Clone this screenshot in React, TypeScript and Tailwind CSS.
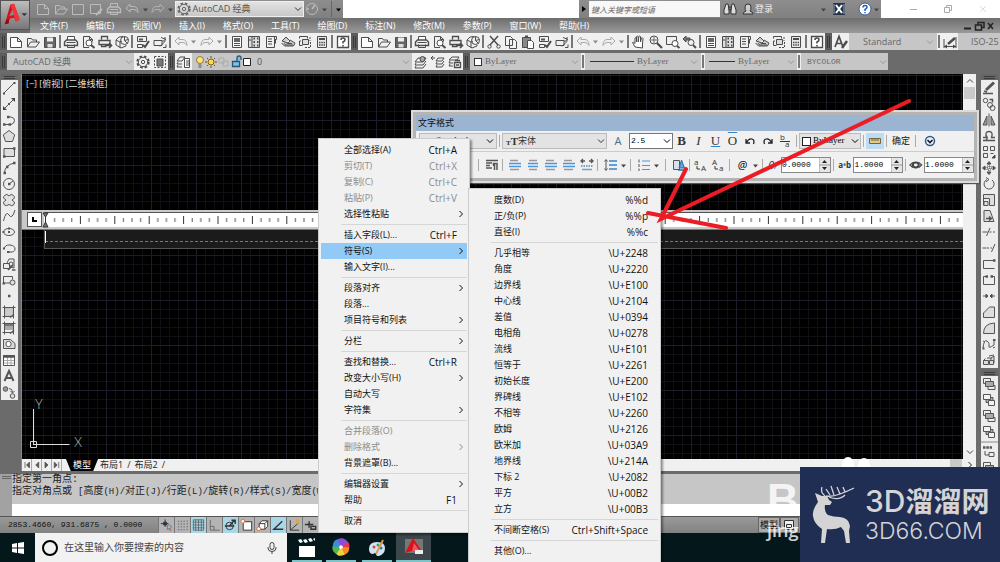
import { Fragment, type ReactNode } from 'react';

const ICONS: Record<string, ReactNode> = {
  new: <path d="M2.5 3.5h7l4 4v6h-11zM9.5 3.5v4h4" fill="#fff" />,
  open: <path d="M2.5 13V4.5h4l1 1.5h4v2M2.5 13l3-5h9l-3.5 5z" />,
  save: (
    <>
      <path d="M2.5 3.5h11v10h-11z" fill="#666" />
      <path d="M5 3.500h6v4H5z" fill="#eee" stroke="none" />
      <path d="M5.500 10h5v3.500h-5z" fill="#ddd" stroke="none" />
    </>
  ),
  saveas: (
    <>
      <path d="M2.500 3.500h10v9h-10z" fill="#777" />
      <path d="M5 3.500h5v3H5z" fill="#ddd" stroke="none" />
      <path d="M8 14l6-6" strokeWidth="2" />
    </>
  ),
  print: (
    <>
      <path d="M4.500 6V2.500h7V6M4.500 10.500v3h7v-3" fill="#fff" />
      <path d="M3.500 6h9l2 2v3.500h-13V8z" strokeWidth="1.400" />
      <path d="M3.500 8.500h9" />
    </>
  ),
  preview: (
    <>
      <path d="M9 13.500H3.500v-11h6l3 3v2M9.500 2.500v3h3" />
      <circle cx="9" cy="9" r="3" fill="#fff" />
      <path d="M11 11l3.500 3" strokeWidth="2" />
    </>
  ),
  publish: (
    <>
      <path d="M4.500 5.500v-3h6v3M2 6.500h11v4H2zM4.500 10.500v2h5" strokeWidth="1.300" />
      <path d="M8 11.500h6M12 9l2.500 2.500L12 14" strokeWidth="1.600" />
    </>
  ),
  dwf: (
    <>
      <path d="M9 2.500L5 3 2 6v5l5 3 5-2v-1M2 6l4 2v6M6 8l2-1" />
      <circle cx="10.500" cy="6.500" r="4" />
      <path d="M10.500 2.500v4l3 3M10.500 6.500l4-1" />
    </>
  ),
  cut: (
    <>
      <path d="M4 2l8 9M12 2L4 11" strokeWidth="1.500" />
      <circle cx="3.500" cy="12.500" r="1.700" />
      <circle cx="12.500" cy="12.500" r="1.700" />
    </>
  ),
  copy: <path d="M2.500 2.500h5l2 2v7h-7zM6.500 5.500h5l2 2v7h-7z" fill="#f4f4f4" />,
  paste: (
    <>
      <path d="M2.500 3.500h8v10h-8z" fill="#888" />
      <path d="M5 2.500h3" strokeWidth="2" />
      <path d="M7.500 6.500h4l2 2v6h-6z" fill="#fff" />
    </>
  ),
  match: (
    <>
      <path d="M2.500 2.500h9v5h-9zM2.500 10.500h5v3h-5z" />
      <path d="M4 4.500h4v2H4z" fill="#555" stroke="none" />
      <path d="M8 11l2 2 4-6" strokeWidth="2" />
    </>
  ),
  block: <path d="M2 6.500h8v5H2zM8 12.500l5-5M13 3v4h-3M9 3.500l5 2M11 13.500h3v-3" />,
  undo: <path d="M2 7l4-4v2.500h4q4 .5 4 6-2-3-4-3H6V11z" />,
  redo: <path d="M14 7l-4-4v2.500H6q-4 .5-4 6 2-3 4-3h4V11z" />,
  props: (
    <>
      <path d="M3.500 2.500h9v11h-9z" fill="#fff" />
      <path d="M5 4h6v4H5z" fill="#666" stroke="none" />
      <path d="M5 9.500h6M5 11.500h6" />
    </>
  ),
  dc: (
    <>
      <path d="M2.500 2.500h11v11h-11zM6 2.500v11M2.500 6h3" fill="#ddd" />
      <path d="M7.500 4.500h1.500M11 4.500h1.500M7.500 8h1.500M11 8h1.500M7.500 11.500h1.500M11 11.500h1.500" strokeWidth="2" />
    </>
  ),
  palette: <path d="M3.500 2.500h10v3h-2v8h-8zM11.500 5.500v-3M5 5h4M5 7.500h4M5 10h4M12.500 5.500v4" />,
  sheet: (
    <>
      <path d="M2 7l4-4 4 4-2 2zM1.500 9l3 3h9l1.500-3-5-3" fill="#ccc" />
      <path d="M4 9.500l2 1.500h7M6 8.500l2 1h4" />
    </>
  ),
  markup: (
    <>
      <path d="M2.500 4.500v-2h8v2M4 7H2.500v4.500h3" />
      <path d="M5.500 5.500h6v5h-6z" fill="#ddd" />
      <path d="M8 13.500h5.500V8M13 3v4" strokeDasharray="2 1" />
    </>
  ),
  calc: (
    <>
      <path d="M3.500 2.500h9v11h-9z" fill="#e8e8e8" />
      <path d="M5 5h6" strokeWidth="2" />
      <path d="M5 8.500h6M5 11h6" strokeWidth="1.500" strokeDasharray="1.500 .8" />
    </>
  ),
  help: (
    <>
      <path d="M2.500 2.500h11v11h-11z" fill="#fff" strokeWidth="1.300" />
      <path d="M6 6q0-2 2-2t2 1.700Q10 7 8 8v1.500M8 11v1.500" strokeWidth="1.600" />
    </>
  ),
  pan: <path d="M4 13L1.500 8.500q1-1 2.500 1V4q1-1 1.500 0v4V2.500q1-1 1.700 0V8l.6-5.500q1-1 1.700 0V8l1-4q1-.7 1.500.5L11.500 10v4z" fill="#fff" />,
  zoomrt: (
    <>
      <circle cx="6" cy="6" r="4" />
      <path d="M6 3v6M3 6h6" strokeWidth=".8" />
      <path d="M9 9l5 5" strokeWidth="2.200" />
    </>
  ),
  zoomwin: (
    <>
      <path d="M1.500 2.500h10v8h-10z" />
      <circle cx="10" cy="9.500" r="3" fill="#fff" />
      <path d="M12 12l2.500 2" strokeWidth="2" />
    </>
  ),
  zoomprev: (
    <>
      <circle cx="9" cy="8.500" r="3" />
      <path d="M11 11l3 3" strokeWidth="2" />
      <path d="M1 5l3-3v2h4v2H4v2z" fill="#777" />
    </>
  ),
  textstyle: (
    <>
      <path d="M2 13L6 2.500 10 13M3.500 9.500h5" strokeWidth="1.700" />
      <path d="M9 14l5-7" strokeWidth="2.500" />
    </>
  ),
  dimstyle: (
    <>
      <path d="M2 5v9M14 3v11M2 12.500h12" />
      <path d="M2 12.500l3-2v4zM14 12.500l-3-2v4z" fill="#444" stroke="none" />
      <path d="M6 10l7-6" strokeWidth="2.500" />
    </>
  ),
  gear: (
    <>
      <circle cx="8" cy="8" r="5.800" strokeDasharray="2.600 2" strokeWidth="1.800" />
      <circle cx="8" cy="8" r="4.700" />
      <circle cx="8" cy="8" r="1.700" />
    </>
  ),
  wssave: (
    <>
      <path d="M2.500 2.500h11v11h-11z" strokeDasharray="2 1.500" />
      <path d="M5 5h6v7H5z" fill="#777" />
    </>
  ),
  layers: (
    <>
      <path d="M1 7l3-4h5L6 7zM1 10l1-2M1 10h5M1 13l1-2M1 13h5" />
      <path d="M8.500 4.500h5v9h-5zM10 7h3M10 9h3M10 11h3" fill="#fff" />
    </>
  ),
  layerpick: (
    <>
      <path d="M2 8l3-4h8l-3 4zM2 11l1-2M2 11h8l3-4M2 14l1-2M2 14h8l3-4" />
      <circle cx="9.500" cy="5" r="2.500" fill="#aaa" />
    </>
  ),
  layerprev: <path d="M1 4h4M3 2L1 4l2 2M6 7l2-3h6l-2 3zM6 10l1-2M6 10h6l2-3M6 13l1-2M6 13h6l2-3" />,
  layerstate: (
    <>
      <path d="M2 6l3-3h7l-2 3zM2 9l1-2M2 9h4M2 12l1-2M2 12h4" />
      <path d="M7.500 8.500h6v5h-6zM9 11h3M8 6.500h5" fill="#eee" strokeWidth="1.300" />
    </>
  ),
  line: (
    <>
      <path d="M3 13L13 3" />
      <path d="M2 13.500h2M12.500 3h2" strokeWidth="2" />
    </>
  ),
  xline: (
    <>
      <path d="M3 13L13 3" />
      <path d="M2 14v-4l4 4zM14 2v4l-4-4z" fill="#444" stroke="none" />
      <path d="M7 8h2" strokeWidth="2" />
    </>
  ),
  pline: (
    <>
      <path d="M3 12.500h7q3.500-1 3.500-4T10 5H8" />
      <path d="M2 12.500h2.500M7.500 12.500H10M6 5h2.500" strokeWidth="2.400" />
    </>
  ),
  polygon: <path d="M8 2.500l5.700 4.300-2.200 6.700h-7L2.300 6.800z" fill="#ddd" />,
  rect: (
    <>
      <path d="M3 4.500h10.500v8H3z" fill="#ddd" />
      <path d="M2 12.500h2.500M12 4.500h2.500" strokeWidth="2.400" />
    </>
  ),
  arc: (
    <>
      <path d="M3.500 13q0-8 10-10" />
      <path d="M2.500 13h2.500M12 3h2.500M5 7h2.500" strokeWidth="2.400" />
    </>
  ),
  circle: (
    <>
      <circle cx="8" cy="8" r="5.500" />
      <path d="M8 8l4-3" />
      <path d="M7 8h2.500" strokeWidth="2.400" />
    </>
  ),
  cloud: <path d="M5 8Q1 6 3.500 3.500T8 4q2-3 4.500-.5T11 8q4 2 2 4.500t-5 0Q5 15 3 12.500T5 8z" fill="#e2e2e2" />,
  spline: <path d="M2.500 13Q5 2 8 7t6-5" />,
  ellipse: (
    <>
      <ellipse cx="8" cy="8" rx="5.500" ry="3.500" />
      <path d="M1.500 8h2M7 4.500h2M7 8h2" strokeWidth="2" />
    </>
  ),
  ellarc: (
    <>
      <path d="M3 9q1-4.500 6-4t5 4-5 3H8" />
      <path d="M2 8.500h2M6 12h2.500" strokeWidth="2.200" />
    </>
  ),
  insert: (
    <>
      <path d="M2.500 7.500h6v5h-6zM6 7l2-4h5v9l-4-1" />
      <path d="M7 14l5-5M11 14h3.500" strokeWidth="1.700" />
      <circle cx="10" cy="8" r="2" />
    </>
  ),
  mkblock: (
    <>
      <path d="M2.500 12V4.500h9v3M2.500 11h7" />
      <circle cx="11.500" cy="10.500" r="2.500" fill="#ddd" />
      <path d="M1.500 11.500h2.500" strokeWidth="2" />
    </>
  ),
  point: <path d="M7 8h2.500" strokeWidth="2.500" />,
  hatch: (
    <>
      <path d="M4 4h8v8H4z" fill="#ccc" stroke="#aaa" strokeDasharray="1 1" />
      <path d="M3.500 1.500v13M12.500 1.500v13M1.500 3.500h13M1.500 12.500h10" />
      <path d="M9 13.500l4-3" strokeWidth="1.500" />
    </>
  ),
  gradient: (
    <>
      <path d="M4 4h8v2H4z" fill="#777" stroke="none" />
      <path d="M4 6h8v4H4z" fill="#aaa" stroke="none" />
      <path d="M3.500 1.500v13M12.500 1.500v13M1.500 3.500h13M1.500 12.500h10" />
      <path d="M9 13.500l4-3" strokeWidth="1.500" />
    </>
  ),
  region: (
    <>
      <path d="M2.500 3.500h7l4.500 4v5H2.500z" fill="#ddd" />
      <circle cx="7.500" cy="8" r="2.700" fill="#fff" />
    </>
  ),
  table: (
    <>
      <path d="M2.500 3.500h11v10h-11z" fill="#fff" />
      <path d="M3 8.500h10M3 11h10M6.500 5v8M10 5v8" stroke="#aaa" />
      <path d="M2 4.500h12" strokeWidth="2.500" />
    </>
  ),
  mtext: <path d="M3.500 13L8 3l4.500 10M5 10h6" strokeWidth="2" />,
  addsel: (
    <>
      <circle cx="4.500" cy="5" r="2.300" fill="#999" />
      <circle cx="11.500" cy="12" r="2.300" fill="#ddd" />
      <path d="M8 4.500q3.500 0 3.500 4M9.500 7l2 2 2-2" />
    </>
  ),
  erase: (
    <>
      <path d="M5 10l8-7.500" strokeWidth="3" />
      <path d="M3 11l3 1M2 13.500h10" strokeWidth="1.500" />
    </>
  ),
  copyobj: (
    <>
      <circle cx="4.500" cy="4.500" r="2.200" />
      <circle cx="9" cy="9" r="2.500" />
      <circle cx="11.500" cy="12" r="2.500" />
      <path d="M8.500 3.500h3v3" strokeWidth="1.500" />
    </>
  ),
  mirror: (
    <>
      <path d="M6 4v9H2zM10 4v9h4z" fill="#999" />
      <path d="M8 1.500v13" />
    </>
  ),
  offset: <path d="M2 12.500h12M2 9.500h3.500q-2-6 2.500-6t2.500 6H14M5 12q2.500-2 0-5" strokeWidth="1.300" />,
  array: (
    <>
      <path d="M2.500 2.500h4v4h-4zM9.500 2.500h4v4h-4zM2.500 9.500h4v4h-4zM9.500 9.500h3" />
      <path d="M14 11v3h-3z" fill="#222" />
    </>
  ),
  move: (
    <>
      <path d="M6 4l2-2.500L10 4zM6 12l2 2.500 2-2.500zM4 6L1.500 8 4 10zM12 6l2.500 2-2.500 2z" fill="#444" />
      <path d="M6 6h4v4H6zM8 4v8M4 8h8" strokeDasharray="1 1" />
    </>
  ),
  rotate: (
    <>
      <path d="M6 3.500A5 5 0 1 0 11 4" />
      <path d="M5 1.500l3 2-3 2.500" />
    </>
  ),
  scale: <path d="M2.500 13.500v-11h11v11h-5v-7h-6M3 9.500h4v4H3z" fill="#ddd" />,
  stretch: (
    <>
      <path d="M3 13.500v-11h6l4 11z" fill="#ddd" />
      <path d="M5 10.500h5M8 8.500l2.500 2-2.500 2" strokeWidth="1.500" />
    </>
  ),
  trim: (
    <>
      <path d="M5.500 12L9 4M1.500 8h5" />
      <path d="M8.500 8H14" strokeDasharray="2 1.500" />
    </>
  ),
  extend: (
    <>
      <path d="M10.500 12L14 4M1.500 8h4" />
      <path d="M6 8h5" strokeDasharray="2 1.500" />
    </>
  ),
  breakpt: (
    <>
      <path d="M13.500 4.500H2.500v8h11" />
      <path d="M12 4.500h2.500" strokeWidth="2.500" />
    </>
  ),
  brk: (
    <>
      <path d="M5 4.500H2.500v8h11v-8H11" />
      <path d="M4.500 4.500H7M9.500 4.500H12" strokeWidth="2.500" />
    </>
  ),
  join: <path d="M2 8h5M9 8h5M5 6l2 2-2 2zM11 6L9 8l2 2z" fill="#444" />,
  chamfer: <path d="M2.500 13.500V9l6-6h5v10.500z" fill="#ddd" />,
  fillet: <path d="M2.500 13.500Q2.500 3.500 13.500 3v10.500z" fill="#ddd" />,
  blend: (
    <>
      <path d="M2 12Q3 3 6 5t2 5 5-1V4" />
      <path d="M1.500 12.500h2M12 4h2.500" strokeWidth="1.800" />
      <path d="M2 5l2 1M12 12l2-1" />
    </>
  ),
  explode: <path d="M2.500 8.500h5v4h-5zM2.500 8.500l2-2M8.500 8.500h4v4h-4zM6 6h4v3M10 6l3-2v7M8 4l5-1" fill="#ddd" />,
  front: (
    <>
      <path d="M2.500 2.500h7v5h-7zM7 9.500h7v4H7z" />
      <path d="M4.500 5.500h8v5h-8z" fill="#aaa" />
    </>
  ),
  back: (
    <>
      <path d="M5 5.500h7v5H5z" fill="#aaa" />
      <path d="M2.500 2.500h7v5h-7zM7.500 8.500h6v5h-6z" fill="#f2f2f2" />
    </>
  ),
  abcfront: (
    <>
      <path d="M2 3.500h9" strokeWidth="2.500" strokeDasharray="2.500 .8" />
      <path d="M4 7v4h4M8 8.500h5v4H8z" />
    </>
  ),
  wheel: (
    <>
      <circle cx="8" cy="8" r="5.500" />
      <path d="M8 8l3-4M3 8h2" strokeWidth="1.500" />
    </>
  ),
  para: (
    <>
      <path d="M2 3.500h12M2 6h6M2 8.500h4M2 11h6" strokeWidth="1.500" />
      <path d="M10.500 13V6.500M13 13V6.500H9.500v2.500" strokeWidth="1.500" />
    </>
  ),
  alignl: (
    <>
      <path d="M3 3.500h8M3 12.500h9" stroke="#999" strokeWidth="1.500" />
      <path d="M2 6.500h12M2 9.500h12" stroke="#4a97dc" strokeWidth="1.600" />
    </>
  ),
  alignc: (
    <>
      <path d="M4 3.500h8M4 12.500h8" stroke="#999" strokeWidth="1.500" />
      <path d="M3 6.500h10M3 9.500h10" stroke="#4a97dc" strokeWidth="1.600" />
    </>
  ),
  ruler2: (
    <>
      <path d="M2 4h4M10 4h4M4 2L2 4l2 2M12 2l2 2-2 2" strokeWidth="1.300" />
      <path d="M2 9h12" stroke="#6aa7d8" strokeWidth="2" strokeDasharray="1.500 1" />
      <path d="M3 12.500h10" stroke="#999" strokeWidth="1.500" />
    </>
  ),
  spacing: (
    <>
      <path d="M3 3v10M1.500 4.500L3 2.500l1.500 2M1.500 11.500l1.500 2 1.500-2" />
      <path d="M6 4h8M6 8h8M6 12h8" stroke="#3484cc" strokeWidth="1.700" />
    </>
  ),
  list: (
    <>
      <path d="M3 2.500v3M3 7v3M3 11.500v2.500" />
      <path d="M6 4h8M6 8.500h8M6 12.500h8" stroke="#4a97dc" />
    </>
  ),
  field: (
    <>
      <path d="M2.500 3.500h6v9h-6z" fill="#d5e2ee" />
      <path d="M8 11l2.500-8 3 8z" fill="#6aa0cc" stroke="#2f6ca5" />
      <path d="M7 13h7" stroke="#2f6ca5" strokeWidth="1.500" />
    </>
  ),
  snap: (
    <>
      <path d="M2 6.500h8M6.500 2v8M5 5h3v3H5z" fill="#444" />
      <path d="M9 8v5M9 8h2q2 0 2 2t-2 2H9" stroke="#4a80b8" />
      <circle cx="12" cy="13" r="1" stroke="#d06040" />
    </>
  ),
  dots: <path d="M3 4h8M3 7h8M3 10h8M3 13h8M13 3v11" stroke="#666" strokeDasharray="1.500 1.500" />,
  grid: <path d="M2.500 2.500h11v11h-11zM5 2v12M8 2v12M11 2v12M2 5h12M2 8h12M2 11h12" stroke="#555" strokeWidth=".8" />,
  ortho: <path d="M3.500 2.500v11h10M3.500 9.500h4v4" stroke="#666" />,
  polar: (
    <>
      <circle cx="7" cy="9" r="4" />
      <path d="M2 9h10M7 9l5-6M9 3h4v4" strokeWidth="1.500" />
    </>
  ),
  osnap: (
    <>
      <path d="M4.500 4.500h9v9h-9z" fill="#fff" />
      <circle cx="4" cy="4" r="2" fill="#fff" stroke="#e06a30" />
    </>
  ),
  osnap3: (
    <>
      <path d="M4.500 6.500h6v6h-6zM4.500 6.500l3-3h6v6l-3 3M10.500 6.500l3-3" fill="#fff" />
      <circle cx="4" cy="12" r="2" fill="#fff" stroke="#e06a30" />
    </>
  ),
  angle: <path d="M13 12.500H3L12 4" strokeWidth="1.500" />,
  ducs: (
    <>
      <path d="M3.500 3v10.500H13M3.500 13.500L12 6" />
      <path d="M10 2l2 2-2 3" stroke="#f0a020" strokeWidth="2" />
    </>
  ),
  dyn: <path d="M2 7.500h9M6.500 4v7M8.500 9.500h5v3h-5z" strokeWidth="1.500" />,
};

function Icon({ name, className = 'text-[#555]' }: { name: string; className?: string }) {
  return (
    <svg viewBox="0 0 16 16" className={`size-4 shrink-0 ${className}`} fill="none" stroke="currentColor" aria-hidden="true">
      {ICONS[name]}
    </svg>
  );
}

function Chevron({ className = '' }: { className?: string }) {
  return (
    <svg viewBox="0 0 8 8" className={`size-2 shrink-0 ${className}`} fill="none" stroke="currentColor" aria-hidden="true">
      <path d="M1 2.500l3 3 3-3" />
    </svg>
  );
}

function Caret({ className = 'text-[#444]' }: { className?: string }) {
  return (
    <svg viewBox="0 0 9 9" className={`size-[9px] shrink-0 ${className}`} fill="currentColor" aria-hidden="true">
      <path d="M2 3.500h5l-2.500 3z" />
    </svg>
  );
}

/* Dropdown with an optional leading drawing */
function Combo({
  label,
  value,
  className = '',
  textClass = '',
  lead,
}: {
  label: string;
  value: string;
  className?: string;
  textClass?: string;
  lead?: ReactNode;
}) {
  return (
    <div className={`flex items-center ${className}`}>
      {lead}
      <select aria-label={label} className={`min-w-0 flex-1 appearance-none bg-transparent outline-none ${textClass}`}>
        <option>{value}</option>
      </select>
      <Chevron />
    </div>
  );
}

/* '|' draws a separator; an icon ending in '+' gets a drop arrow */
function Tools({ items }: { items: string[] }) {
  return (
    <div className="flex h-[17px] shrink-0 items-center bg-[#f0f0f0]">
      {items.map((item, i) => {
        if (item === '|') return <span key={i} className="mx-px h-[13px] w-[2px] bg-[#777]" />;
        const name = item.replace('+', '');
        const dim = name === 'undo' || name === 'redo';
        return (
          <Fragment key={i}>
            <button aria-label={name} className="flex w-[17px] justify-center">
              <Icon name={name} className={dim ? 'text-[#aaa]' : 'text-[#4c4c4c]'} />
            </button>
            {item.endsWith('+') && <Caret className="text-[#888]" />}
          </Fragment>
        );
      })}
    </div>
  );
}

function Grip() {
  return (
    <div className="flex h-[17px] w-[7px] shrink-0 items-center justify-center bg-[#5c5c5c]">
      <span className="h-3 w-[3px] border-x border-[#3a3a3a]" />
    </div>
  );
}

const STANDARD = ['new', 'open', 'save', '|', 'print', 'preview', 'publish', 'dwf', '|'];
const HISTORY = ['undo+', 'redo+', '|'];
const PALETTES = ['props', 'dc', 'palette', 'sheet', 'markup', 'calc', '|', 'help'];

const MENUS = ['文件(F)', '编辑(E)', '视图(V)', '插入(I)', '格式(O)', '工具(T)', '绘图(D)', '标注(N)', '修改(M)', '参数(P)', '窗口(W)', '帮助(H)'];

function Header() {
  return (
    <header className="flex shrink-0 bg-[#6b6b6b]">
      <button aria-label="Application menu" className="flex h-[30px] w-[30px] items-center border border-[#555] bg-gradient-to-b from-[#bdbdbd] to-[#777]">
        <svg viewBox="0 0 30 30" className="size-7" aria-hidden="true">
          <path d="M4 25L10 4l4-1 6 17-4 2-2-4-5 1-1 5z" fill="#d3141c" />
          <path d="M10 4l4-1 6 17-4 2z" fill="#f0353c" />
          <path d="M9 16l3-7 2 6z" fill="#8a8a8a" />
          <path d="M4 25l4-1 1-5-3 1z" fill="#8f0b10" />
          <path d="M22 13h6l-3 3z" fill="#333" />
        </svg>
      </button>
      <div className="min-w-0 flex-1">
        <div className="flex h-[18px] bg-white">
          <div className="flex w-[313px] shrink-0 items-center bg-gradient-to-b from-[#8e8e8e] to-[#808080] pl-1">
            {['new', 'open', 'save', 'saveas', 'print', 'undo'].map((n) => (
              <button key={n} aria-label={n} className="flex w-[18px] justify-center">
                <Icon name={n} className="text-[#bbb] [&_*]:fill-none" />
              </button>
            ))}
            <Caret />
            <button aria-label="redo" className="flex w-[17px] justify-center">
              <Icon name="redo" className="text-[#b0b0b0]" />
            </button>
            <Caret />
            <Combo
              label="Workspace"
              value="AutoCAD 经典"
              className="h-4 w-[130px] border border-[#eee] bg-gradient-to-b from-[#e2e2e2] to-[#c8c8c8] pr-px text-[#333]"
              textClass="text-[9px] text-[#555]"
              lead={<Icon name="gear" className="text-[#666]" />}
            />
            <Icon name="wheel" className="text-[#bbb]" />
            <Caret />
            <span className="mx-[2px] h-4 w-px bg-[#666]" />
            <Caret className="text-black" />
          </div>
          <div className="flex-1" />
          <div className="flex w-[302px] shrink-0 items-center bg-gradient-to-b from-[#8e8e8e] to-[#808080]">
            <svg viewBox="0 0 8 8" className="ml-px size-2" aria-hidden="true">
              <path d="M2 1l4 3-4 3z" fill="#000" />
            </svg>
            <input
              aria-label="Search"
              placeholder="键入关键字或短语"
              className="ml-px h-4 w-[131px] bg-[#f8f8f8] pl-[2px] text-[8px] italic outline-none placeholder:text-[#666]"
            />
            <svg viewBox="0 0 14 14" className="ml-[3px] size-3.5" fill="#ddd" stroke="#333" aria-hidden="true">
              <path d="M3 2h2l1 5v5H1V8zM9 2h2l2 6v4H8V7zM6 5h2v3H6z" />
            </svg>
            <button className="ml-1 flex items-center text-[9px] text-[#eee]">
              <svg viewBox="0 0 14 14" className="size-3.5" fill="#ccc" stroke="#333" aria-hidden="true">
                <path d="M2 12q0-2 3-3-1-1-1-4t3-3 3 3-1 4q3 1 3 3z" />
              </svg>
              登录
            </button>
            <span className="flex-1" />
            <Caret />
            <svg viewBox="0 0 14 14" className="mx-1 size-3.5" aria-hidden="true">
              <path d="M1 1h12v12H1z" fill="#26344a" />
              <path d="M4 3l6 8M10 3l-6 8" stroke="#fff" strokeWidth="2" />
              <path d="M2 2v10M12 2v10" stroke="#9ab" />
            </svg>
            <svg viewBox="0 0 14 14" className="ml-2 size-3.5" fill="none" aria-hidden="true">
              <circle cx="7" cy="7" r="6" fill="#fff" stroke="#3c5f96" />
              <path d="M5 5.500q0-2 2-2t2 1.700Q9 6.500 7 7.500V9M7 10v1.300" stroke="#1f5fc0" strokeWidth="1.500" />
            </svg>
            <Caret />
          </div>
          <div className="flex w-[119px] shrink-0 items-center justify-around pl-4 text-[#aaa]">
            <svg viewBox="0 0 10 10" className="size-2.5" fill="none" stroke="currentColor" aria-hidden="true">
              <path d="M1 5.500h7" />
            </svg>
            <svg viewBox="0 0 10 10" className="size-2.5" fill="none" stroke="currentColor" aria-hidden="true">
              <path d="M1.500 3.500h5v5h-5zM3.500 3V1.500h5v5H7" />
            </svg>
            <svg viewBox="0 0 10 10" className="size-2.5" fill="none" stroke="#ddd" aria-hidden="true">
              <path d="M2 2l6 6M8 2L2 8" />
            </svg>
          </div>
        </div>
        <nav className="flex h-[15px] items-center gap-[18px] bg-gradient-to-b from-[#6e6e6e] to-[#9a9a9a] pl-[10px] text-[9px] leading-[15px] text-white">
          {MENUS.map((m) => (
            <button key={m} className="whitespace-nowrap">
              {m}
            </button>
          ))}
          <span className="flex-1" />
          <svg viewBox="0 0 34 10" className="mr-1 h-2.5 w-[34px]" fill="none" stroke="#222" aria-hidden="true">
            <path d="M2 7.500h7" strokeWidth="2" />
            <path d="M13.500 4h6v5h-6zM16 3.500V1.500h6v5h-2M26 2l5 6M31 2l-5 6" strokeWidth="1.500" />
          </svg>
        </nav>
      </div>
    </header>
  );
}

function ToolRows() {
  const field = 'h-[17px] bg-[#c6c6c6] text-[#999]';
  return (
    <>
      <div className="flex h-[17px] shrink-0 overflow-hidden">
        <Grip />
        <Tools items={[...STANDARD, 'match', 'block', '|', ...HISTORY, ...PALETTES]} />
        <Grip />
        <Tools
          items={[...STANDARD, 'cut', 'copy', 'paste', 'match', 'block', '|', ...HISTORY, 'pan', 'zoomrt', 'zoomwin', 'zoomprev', '|', ...PALETTES]}
        />
        <Grip />
        <Tools items={['textstyle']} />
        <Combo label="Text style" value="Standard" className={`${field} w-[88px] pl-[14px] pr-[3px]`} textClass="text-[9px] text-[#666]" />
        <Tools items={['|', 'dimstyle']} />
        <Combo label="Dimension style" value="ISO-25" className={`${field} min-w-[42px] flex-1 pl-[13px]`} textClass="text-[9px] text-[#666] min-w-[50px]" />
      </div>
      <div className="mt-[3px] flex h-[17px] shrink-0">
        <Grip />
        <Combo label="Workspaces" value="AutoCAD 经典" className={`${field} w-[127px] pl-[6px] pr-px`} textClass="text-[9px] text-[#666]" />
        <Tools items={['gear', 'wssave']} />
        <Grip />
        <Tools items={['layers']} />
        <Combo
          label="Layer"
          value="0"
          className={`${field} w-[220px] pl-px pr-[2px]`}
          textClass="pl-1 text-[9px] text-[#555]"
          lead={
            <svg viewBox="0 0 60 16" className="h-4 w-[60px] shrink-0" fill="none" aria-hidden="true">
              <circle cx="7" cy="6" r="3.500" fill="#ffe27a" stroke="#8a7a3a" />
              <path d="M5.500 11h3M5.500 13h3" stroke="#555" />
              <circle cx="18" cy="8" r="3" fill="#ffd84a" stroke="#776020" />
              <path d="M18 2v2M18 12v2M12 8h2M22 8h2M14 4l1 1M22 4l-1 1M14 12l1-1M22 12l-1-1" stroke="#665520" />
              <path d="M26 4h5v5h-5zM30 7h5v5h-5z" stroke="#aaa" />
              <path d="M39.500 7.500h7v5h-7zM44 7V4q0-2 2-2t2 2v2" fill="#7fc0ea" stroke="#27567a" strokeWidth="1.300" />
              <path d="M50.500 4.500h7v7h-7z" fill="#fff" stroke="#222" />
            </svg>
          }
        />
        <Tools items={['layerpick', 'layerprev', 'layerstate']} />
        <Grip />
        <Combo
          label="Color"
          value="ByLayer"
          className={`${field} w-[111px] pl-1 pr-[2px]`}
          textClass="pl-[3px] font-[family-name:'Liberation_Serif',serif] text-[9px] text-[#666]"
          lead={<span className="size-[8px] border border-[#333] bg-white" />}
        />
        <Tools items={['|']} />
        <Combo
          label="Linetype"
          value="ByLayer"
          className={`${field} w-[116px] pl-[5px] pr-[3px]`}
          textClass="pl-[3px] font-[family-name:'Liberation_Serif',serif] text-[9px] text-[#666]"
          lead={<span className="h-px w-[44px] bg-[#333]" />}
        />
        <Tools items={['|']} />
        <Combo
          label="Lineweight"
          value="ByLayer"
          className={`${field} w-[92px] pl-1 pr-[2px]`}
          textClass="pl-[3px] font-[family-name:'Liberation_Serif',serif] text-[9px] text-[#666]"
          lead={<span className="h-px w-[26px] bg-[#333]" />}
        />
        <Tools items={['|']} />
        <Combo
          label="Plot style"
          value="BYCOLOR"
          className={`${field} w-[87px] pl-[6px] pr-px`}
          textClass="font-[family-name:'Liberation_Mono',monospace] text-[8px] text-[#666]"
        />
      </div>
    </>
  );
}

const DRAW = ['line', 'xline', 'pline', 'polygon', 'rect', 'arc', 'circle', 'cloud', 'spline', 'ellipse', 'ellarc', 'insert', 'mkblock', 'point', 'hatch', 'gradient', 'region', 'table', 'mtext', 'addsel'];
const MODIFY = ['erase', 'copyobj', 'mirror', 'offset', 'array', 'move', 'rotate', 'scale', 'stretch', 'trim', 'extend', 'breakpt', 'brk', 'join', 'chamfer', 'fillet', 'blend', 'explode'];
const ORDER = ['front', 'back', 'front', 'back', '|', 'abcfront', 'front'];

function Column({ items }: { items: string[] }) {
  return (
    <div className="w-[17px] bg-[#ededed]">
      <div className="flex h-[6px] items-center justify-center bg-[#666]">
        <span className="h-[3px] w-[11px] border-y border-[#3a3a3a]" />
      </div>
      {items.map((n, i) =>
        n === '|' ? (
          <div key={i} className="my-px h-[2px] bg-[#bbb]" />
        ) : (
          <button key={i} aria-label={n} className="block">
            <Icon name={n} />
          </button>
        ),
      )}
    </div>
  );
}

function Canvas() {
  return (
    <div className="relative min-h-0 flex-1 overflow-hidden bg-black">
      <svg className="absolute inset-0 size-full" aria-hidden="true">
        <defs>
          <pattern id="grid" x="39" y="1" width="45" height="45" patternUnits="userSpaceOnUse">
            <path d="M9.500 0v45M18.500 0v45M27.500 0v45M36.500 0v45M0 9.500h45M0 18.500h45M0 27.500h45M0 36.500h45" stroke="#0f0f16" />
            <path d="M.5 0v45M0 .5h45" stroke="#1c1d2b" />
          </pattern>
        </defs>
        <rect width="100%" height="100%" fill="url(#grid)" />
      </svg>
      <p className="relative pl-1 pt-[2px] text-[9px] leading-4 text-[#ddd]">[−] [俯视] [二维线框]</p>

      {/* In-place editor: ruler and text line */}
      <div className="absolute inset-x-0 top-[136px]">
        <div className="flex h-5 items-center border-b border-[#777] bg-[#c9c9c9] pl-[5px]">
          <div className="flex size-[15px] items-center justify-center border border-[#555] bg-white">
            <span className="size-[5px] border-b-2 border-l-2 border-black" />
          </div>
          <svg className="h-4 min-w-0 flex-1" aria-hidden="true">
            <defs>
              <pattern id="ticks" x="3.500" width="34.400" height="16" patternUnits="userSpaceOnUse">
                <path d="M.5 4v8" stroke="#333" />
                <path d="M9.100 6v4M17.700 6v4M26.300 6v4" stroke="#555" />
              </pattern>
            </defs>
            <rect x="2" y="1" width="100%" height="14" fill="#fff" />
            <rect x="2" y="0" width="100%" height="1" fill="#555" />
            <rect x="6" width="100%" height="16" fill="url(#ticks)" />
            <path d="M1 1h5L3.500 5zM1 15h5l-2.500-5zM3.500 4v7" fill="#777" stroke="#333" />
          </svg>
        </div>
        <div className="ml-[22px] h-[19px] border-b border-l border-[#555] bg-[#1b1b1b] pt-px">
          <div className="h-[11px] border-b border-dashed border-[#777]">
            <div className="h-3 w-px bg-white" />
          </div>
        </div>
      </div>

      <svg viewBox="0 0 60 60" className="absolute bottom-1 left-1 size-[60px] overflow-visible" fill="none" stroke="#ddd" aria-hidden="true">
        <path d="M7.500 14v36M7.500 49.500h36M4.500 46.500h6v6h-6z" />
        <text x="9" y="14" fontSize="13" fontWeight="300" fill="#bbb" stroke="none" fontFamily="Lato, sans-serif">Y</text>
        <text x="48" y="52" fontSize="13" fontWeight="300" fill="#bbb" stroke="none" fontFamily="Lato, sans-serif">X</text>
      </svg>
    </div>
  );
}

function LayoutTabs() {
  return (
    <div className="flex h-3 shrink-0 items-center bg-[#f0f0f0] text-[9px] leading-3 text-[#222]">
      {['M4 2v8M10 2L6 6l4 4z', 'M9 2L5 6l4 4z', 'M4 2l4 4-4 4z', 'M3 2l4 4-4 4zM9 2v8'].map((d) => (
        <button key={d} aria-label="Scroll tabs" className="border-r border-[#aaa]">
          <svg viewBox="0 0 12 12" className="h-3 w-[9px]" fill="#555" stroke="#555" aria-hidden="true">
            <path d={d} />
          </svg>
        </button>
      ))}
      <button className="ml-1 bg-black px-[7px] text-white [clip-path:polygon(0_0,100%_0,85%_100%,15%_100%)]">模型</button>
      <button className="pl-[2px]">布局1</button>
      <span className="px-1">/</span>
      <button>布局2</button>
      <span className="px-1">/</span>
      <span className="flex-1" />
      <span className="mr-1 h-3 w-3 bg-[#c9c9c9]" />
      <Chevron className="mr-[2px] -rotate-90" />
    </div>
  );
}

type Entry = { label: string; keys?: string; sub?: boolean; off?: boolean; on?: boolean } | null;

const MENU: Entry[] = [
  { label: '全部选择(A)', keys: 'Ctrl+A' },
  { label: '剪切(T)', keys: 'Ctrl+X', off: true },
  { label: '复制(C)', keys: 'Ctrl+C', off: true },
  { label: '粘贴(P)', keys: 'Ctrl+V', off: true },
  { label: '选择性粘贴', sub: true },
  null,
  { label: '插入字段(L)...', keys: 'Ctrl+F' },
  { label: '符号(S)', sub: true, on: true },
  { label: '输入文字(I)...' },
  null,
  { label: '段落对齐', sub: true },
  { label: '段落...' },
  { label: '项目符号和列表', sub: true },
  null,
  { label: '分栏', sub: true },
  null,
  { label: '查找和替换...', keys: 'Ctrl+R' },
  { label: '改变大小写(H)', sub: true },
  { label: '自动大写' },
  { label: '字符集', sub: true },
  null,
  { label: '合并段落(O)', off: true },
  { label: '删除格式', sub: true, off: true },
  { label: '背景遮罩(B)...' },
  null,
  { label: '编辑器设置', sub: true },
  { label: '帮助', keys: 'F1' },
  null,
  { label: '取消' },
];

const SYMBOLS: Entry[] = [
  { label: '度数(D)', keys: '%%d' },
  { label: '正/负(P)', keys: '%%p' },
  { label: '直径(I)', keys: '%%c' },
  null,
  { label: '几乎相等', keys: '\\U+2248' },
  { label: '角度', keys: '\\U+2220' },
  { label: '边界线', keys: '\\U+E100' },
  { label: '中心线', keys: '\\U+2104' },
  { label: '差值', keys: '\\U+0394' },
  { label: '电相角', keys: '\\U+0278' },
  { label: '流线', keys: '\\U+E101' },
  { label: '恒等于', keys: '\\U+2261' },
  { label: '初始长度', keys: '\\U+E200' },
  { label: '界碑线', keys: '\\U+E102' },
  { label: '不相等', keys: '\\U+2260' },
  { label: '欧姆', keys: '\\U+2126' },
  { label: '欧米加', keys: '\\U+03A9' },
  { label: '地界线', keys: '\\U+214A' },
  { label: '下标 2', keys: '\\U+2082' },
  { label: '平方', keys: '\\U+00B2' },
  { label: '立方', keys: '\\U+00B3' },
  null,
  { label: '不间断空格(S)', keys: 'Ctrl+Shift+Space' },
  null,
  { label: '其他(O)...' },
];

function PopupMenu({ entries, className }: { entries: Entry[]; className: string }) {
  return (
    <div role="menu" className={`absolute border border-[#ccc] bg-[#f1f1f1] px-[2px] py-[3px] shadow-[2px_2px_2px_rgba(0,0,0,0.4)] ${className}`}>
      {entries.map((e, i) =>
        e === null ? (
          <div key={i} role="separator" className="ml-5 flex h-[5px] items-center">
            <span className="h-px flex-1 bg-[#d6d6d6]" />
          </div>
        ) : (
          <button
            key={i}
            role="menuitem"
            disabled={e.off}
            className={`flex h-4 w-full items-center pl-[23px] text-left text-[9px] leading-4 ${e.on ? 'bg-[#91c9f7]' : ''} ${e.off ? 'text-[#8c8c8c]' : 'text-[#111]'}`}
          >
            <span className="flex-1">{e.label}</span>
            {e.keys && <span className="pr-[10px] text-[10px]">{e.keys}</span>}
            {e.sub && <Chevron className="mr-[2px] -rotate-90" />}
          </button>
        ),
      )}
    </div>
  );
}

function Bar() {
  return <span className="mx-[2px] h-3 w-px shrink-0 bg-[#aaa]" />;
}

function Spin({ label, value }: { label: string; value: string }) {
  return (
    <div className="flex h-4 w-[50px] border border-[#888] bg-white">
      <input aria-label={label} defaultValue={value} className="w-[37px] min-w-0 font-[family-name:'Liberation_Mono',monospace] text-[8px] outline-none" />
      <svg viewBox="0 0 11 14" className="h-3.5 w-[11px] bg-[#e6e6e6]" aria-hidden="true">
        <path d="M0 0v14M0 7h11" stroke="#999" />
        <path d="M3 5h5L5.500 2zM3 9h5l-2.500 3z" fill="#222" />
      </svg>
    </div>
  );
}

function TextFormat() {
  const glyph = "w-[17px] text-center font-[family-name:'Liberation_Serif',serif] text-[13px] leading-4 text-[#333]";
  return (
    <section className="absolute left-[411px] top-[110px] w-[568px] border-2 border-[#dcdcdc] bg-[#b4b4b4] p-[3px] shadow-[1px_1px_1px_#555]">
      <h2 className="h-4 bg-[#9ab4d2] pl-[2px] text-[9px] leading-4 text-[#111]">文字格式</h2>
      <div className="flex h-[21px] items-center border-b border-[#ccc] bg-[#f0f0f0] pl-[3px]">
        <Combo
          label="Style"
          value="Standard"
          className="h-4 w-[78px] border border-[#bbb] bg-[#e3e3e3] pl-4 pr-[2px]"
          textClass="font-[family-name:'Liberation_Serif',serif] text-[9px]"
        />
        <Bar />
        <Combo
          label="Font"
          value="宋体"
          className="h-4 w-[105px] border border-[#bbb] bg-[#e3e3e3] pl-[3px] pr-px text-[#333]"
          textClass="text-[9px]"
          lead={<span className="font-[family-name:'Liberation_Serif',serif] text-[7px] font-bold">T<b className="text-[11px]">T</b></span>}
        />
        <span className="w-[22px] text-center text-[11px] leading-4 text-[#3f7196]">A</span>
        <Combo
          label="Height"
          value="2.5"
          className="h-4 w-[44px] border border-[#777] bg-white pl-px pr-px"
          textClass="font-[family-name:'Liberation_Mono',monospace] text-[8px]"
        />
        <button className={`${glyph} font-bold`}>B</button>
        <button className={`${glyph} italic`}>I</button>
        <button className={`${glyph} underline decoration-[#3484cc]`}>U</button>
        <button className={`${glyph} overline decoration-[#3484cc]`}>O</button>
        <button aria-label="Undo" className="flex w-[18px] justify-center">
          <svg viewBox="0 0 12 12" className="size-3" fill="none" stroke="#222" strokeWidth="1.300" aria-hidden="true">
            <path d="M2 4v4h4M2.500 7.500Q5 3 8 4t1.500 5" />
          </svg>
        </button>
        <button aria-label="Redo" className="flex w-[17px] justify-center">
          <svg viewBox="0 0 12 12" className="size-3" fill="none" stroke="#222" strokeWidth="1.300" aria-hidden="true">
            <path d="M10 4v4H6M9.500 7.500Q7 3 4 4T2.500 9" />
          </svg>
        </button>
        <button aria-label="Stack" className="flex w-[18px] justify-center">
          <svg viewBox="0 0 14 14" className="size-3.5 overflow-visible" fill="#333" fontSize="8" aria-hidden="true">
            <text x="2" y="6">b</text>
            <path d="M2 7.500h10" stroke="#333" />
            <text x="7" y="13">a</text>
          </svg>
        </button>
        <Bar />
        <Combo
          label="Text color"
          value="ByLayer"
          className="h-4 w-[62px] border border-[#bbb] bg-[#e3e3e3] pl-[2px] pr-px"
          textClass="pl-[2px] font-[family-name:'Liberation_Serif',serif] text-[9px]"
          lead={<span className="size-[9px] border border-[#222] bg-white" />}
        />
        <Bar />
        <button aria-label="Ruler" className="flex h-4 w-[18px] items-center justify-center bg-[#bcdcf4]">
          <svg viewBox="0 0 12 8" className="h-2 w-3" aria-hidden="true">
            <path d="M.5 1.500h11v5H.5z" fill="#e0c98a" stroke="#75683c" />
            <path d="M3 2v2M5 2v2M7 2v2M9 2v2" stroke="#75683c" />
          </svg>
        </button>
        <Bar />
        <button className="px-[3px] text-[9px] text-[#111]">确定</button>
        <Bar />
        <button aria-label="Options" className="ml-[6px]">
          <svg viewBox="0 0 12 12" className="size-3" fill="none" aria-hidden="true">
            <circle cx="6" cy="6" r="4.500" fill="#eef" stroke="#2f5a8a" strokeWidth="1.500" />
            <path d="M3.500 5L6 7.500 8.500 5" stroke="#123" strokeWidth="1.700" />
          </svg>
        </button>
      </div>
      <div className="flex h-[26px] items-center bg-[#f0f0f0] pl-[60px]">
        <Bar />
        <span className="w-[3px]" />
        <Icon name="para" />
        <Bar />
        <span className="flex gap-[2px] pl-[2px]">
          <Icon name="alignl" />
          <Icon name="alignc" />
          <Icon name="alignl" />
          <Icon name="alignl" />
          <Icon name="ruler2" />
        </span>
        <Bar />
        <span className="w-[3px]" />
        <Icon name="spacing" />
        <Caret />
        <Bar />
        <span className="w-[3px]" />
        <Icon name="list" />
        <Caret />
        <span className="w-[2px]" />
        <Bar />
        <span className="w-[3px]" />
        <Icon name="field" />
        <Bar />
        {['aA', 'Aa'].map((t) => (
          <button key={t} aria-label="Change case" className="flex w-[18px] justify-center">
            <svg viewBox="0 0 14 14" className="size-3.5 overflow-visible" fontSize="8" fill="#333" aria-hidden="true">
              <text x="1" y="7">{t[0]}</text>
              <text x="8" y="13">{t[1]}</text>
              <path d="M4 8v3h3" fill="none" stroke="#333" />
            </svg>
          </button>
        ))}
        <Bar />
        <span className="w-[20px] pl-[6px] text-[11px] italic leading-4">@</span>
        <Caret />
        <Bar />
        <span className="w-[16px] text-center text-[11px] italic leading-4 text-[#333]">
          0<span className="text-[#3484cc]">/</span>
        </span>
        <Spin label="Oblique angle" value="0.0000" />
        <Bar />
        <span className="w-[18px] text-center text-[8px] font-bold leading-4 text-[#333]">
          a<span className="text-[#3484cc]">•</span>b
        </span>
        <Spin label="Tracking" value="1.0000" />
        <Bar />
        <svg viewBox="0 0 16 10" className="h-2.5 w-4" fill="none" stroke="#444" strokeWidth="2" aria-hidden="true">
          <ellipse cx="8" cy="5" rx="3" ry="2.500" />
          <path d="M5 2.500L2 5l3 2.500M11 2.500l3 2.500-3 2.500" strokeWidth="1.200" />
        </svg>
        <Spin label="Width factor" value="1.0000" />
      </div>
    </section>
  );
}

const PROMPTS = [
  ['高度', '(H)'],
  ['对正', '(J)'],
  ['行距', '(L)'],
  ['旋转', '(R)'],
  ['样式', '(S)'],
  ['宽度', '(W'],
];

const STATUS = ['snap', 'dots', 'grid', 'ortho', 'polar', 'osnap', 'osnap3', 'angle', 'ducs', 'dyn'];
const ACTIVE = ['grid', 'polar', 'angle'];

function Bottom() {
  return (
    <>
      <div className="mt-[3px] flex h-[43px] shrink-0 border-b border-[#555] bg-[#c6c6c6]">
        <div className="flex w-3 shrink-0 justify-center bg-[#a2a2a2] pt-[2px]">
          <span className="h-[3px] w-[9px] border-y border-[#666]" />
        </div>
        <div className="min-w-0 flex-1 font-[family-name:'Liberation_Mono','Noto_Sans_CJK_SC',monospace] text-[10px] leading-3 text-[#222]">
          <p className="h-3">指定第一角点:</p>
          <p className="h-[18px] whitespace-nowrap">
            指定对角点或 <span className="text-[9px]">[</span>
            {PROMPTS.map(([name, key], i) => (
              <Fragment key={key}>
                {i > 0 && <span className="text-[9px]">/</span>}
                {name}
                <span className="text-[9px]">{key}</span>
              </Fragment>
            ))}
          </p>
          <input aria-label="Command" className="block h-3 w-full bg-white outline-none" />
        </div>
      </div>
      <div className="flex h-4 shrink-0 items-center bg-gradient-to-b from-[#9a9a9a] to-[#828282]">
        <span className="w-[158px] pl-2 font-[family-name:'Liberation_Mono',monospace] text-[8px] text-[#111]">
          <span className="whitespace-nowrap">2853.4660, 931.6875 , 0.0000</span>
        </span>
        {STATUS.map((n) => (
          <button key={n} aria-label={n} className={`border-l border-[#777] ${ACTIVE.includes(n) ? 'bg-[#a9d7e6]' : 'bg-[#b4b4b4]'}`}>
            <Icon name={n} className="w-[15px] text-[#333]" />
          </button>
        ))}
        <span className="flex-1" />
        <button className="h-4 border border-[#666] bg-[#aaa] px-px text-[9px] leading-[14px] text-[#111]">模型</button>
        <button aria-label="Layout" className="mr-[201px] border border-[#666] bg-[#aaa]">
          <svg viewBox="0 0 17 14" className="h-3.5 w-[17px]" fill="#eee" stroke="#333" aria-hidden="true">
            <path d="M3.500 2.500h9v9h-9zM5.500 6.500h5v3h-5z" />
          </svg>
        </button>
      </div>
      <footer className="flex h-[29px] shrink-0 bg-[#04181c]">
        <button aria-label="Start" className="flex w-[35px] items-center justify-center">
          <svg viewBox="0 0 14 14" className="size-3.5" fill="#fff" aria-hidden="true">
            <path d="M1 3l5-1v4.500H1zM7 2l6-1v5.500H7zM1 7.500h5V12l-5-1zM7 7.500h6V13l-6-1z" />
          </svg>
        </button>
        <label className="flex w-[252px] items-center bg-[#f2f2f2] pl-[7px]">
          <span className="size-4 rounded-full border-2 border-black" />
          <input aria-label="Search Windows" placeholder="在这里输入你要搜索的内容" className="ml-[6px] min-w-0 flex-1 text-[10px] outline-none placeholder:text-[#444]" />
          <svg viewBox="0 0 12 14" className="mr-[9px] h-3.5 w-3" fill="none" stroke="#444" aria-hidden="true">
            <rect x="4" y="1.500" width="4" height="7" rx="2" />
            <path d="M2 6v1q0 3.500 4 3.500T10 7V6M6 10.500V13" />
          </svg>
        </label>
        <button aria-label="Video editor" className="ml-[5px] mr-1 w-[30px] border-b-2 border-[#7cc4c8]">
          <svg viewBox="0 0 30 26" className="h-[26px] w-[30px]" fill="#fff" aria-hidden="true">
            <path d="M7 12h16v11H7zM6 6l3-1 2 3-3 1zM11 6l3-1 2 3-3 1zM16 5l3-1 2 3-3 1zM21 5l2-1v3z" />
          </svg>
        </button>
        <button aria-label="Photos" className="mr-[6px] w-[30px] border-b-2 border-[#7cc4c8]">
          <svg viewBox="-15 -14 30 28" className="h-[26px] w-[30px]" aria-hidden="true">
            {['#e8384f', '#f28b30', '#f4d03a', '#4cb94c', '#3a8ce0', '#8a4fd6'].map((c, i) => (
              <path key={c} d="M0 0L-4-8Q3-12 7-5z" fill={c} transform={`rotate(${i * 60 + 60})`} />
            ))}
            <circle r="2" fill="#fff" />
          </svg>
        </button>
        <button aria-label="Paint" className="w-[30px] border-b-2 border-[#7cc4c8]">
          <svg viewBox="0 0 30 26" className="h-[26px] w-[30px]" aria-hidden="true">
            <path d="M7 15q0-7 8-7t8 6-6 8q-3 0-3-2t-3 0q-4 0-4-5z" fill="#cfe4f2" />
            <circle cx="12" cy="13" r="1.500" fill="#e04040" />
            <circle cx="16" cy="11" r="1.500" fill="#40a050" />
            <circle cx="19" cy="14" r="1.500" fill="#3070c0" />
            <path d="M14 20l7-14" stroke="#d79a4c" strokeWidth="2" />
          </svg>
        </button>
        <button aria-label="AutoCAD" className="ml-1 flex w-[35px] justify-center border-b-2 border-[#7cc4c8] bg-[#3b474b]">
          <svg viewBox="0 0 24 26" className="h-[26px] w-6" aria-hidden="true">
            <path d="M3 6h18v14H3z" fill="#777" />
            <path d="M3 20L11 5l8 12-5-1-4 2z" fill="#d3141c" />
            <path d="M10 18l2-8 5 7z" fill="#f3555a" />
            <path d="M13 17h8v4h-8z" fill="#eee" />
          </svg>
        </button>
      </footer>
    </>
  );
}

export default function App() {
  return (
    <div className="relative flex h-screen flex-col overflow-hidden bg-[#6b6b6b] font-[family-name:'Open_Sans','Noto_Sans_CJK_SC',sans-serif]">
      <Header />
      <ToolRows />
      <main className="mt-1 flex min-h-0 flex-1">
        <div className="w-[22px] shrink-0 border-r border-[#888] pl-px">
          <Column items={DRAW} />
        </div>
        <div className="flex min-w-0 flex-1 flex-col">
          <div className="flex min-h-0 flex-1">
            <Canvas />
            <div className="flex w-[13px] shrink-0 flex-col items-center bg-[#f0f0f0] py-[3px] text-[#444]">
              <Chevron className="rotate-180" />
              <span className="mt-[2px] h-3 w-[11px] bg-[#c9c9c9]" />
              <span className="flex-1" />
              <Chevron />
            </div>
          </div>
          <LayoutTabs />
        </div>
        <div className="w-6 shrink-0 space-y-[2px] overflow-hidden pl-[5px]">
          <Column items={MODIFY} />
          <Column items={ORDER} />
        </div>
      </main>
      <Bottom />

      <TextFormat />
      <PopupMenu entries={MENU} className="left-[318px] top-[138px] w-[152px]" />
      <PopupMenu entries={SYMBOLS} className="left-[468px] top-[188px] w-[193px]" />

      <svg viewBox="0 0 280 140" className="pointer-events-none absolute left-[640px] top-[95px] h-[140px] w-[280px]" fill="none" stroke="#ec1c24" strokeWidth="4" strokeLinecap="round" aria-hidden="true">
        <path d="M269 6L21 124L46 74M8 118l78 15" />
      </svg>

      <div className="absolute bottom-[22px] left-[767px] text-white/80">
        <p className="font-[family-name:'Liberation_Sans',sans-serif] text-[44px] font-bold leading-[40px]">Ba</p>
        <p className="text-[18px] font-semibold leading-5">jing</p>
      </div>
      <svg viewBox="0 0 32 12" className="absolute bottom-[94px] left-[840px] h-3 w-8" fill="#fff" aria-hidden="true">
        <ellipse cx="8" cy="9" rx="6" ry="8" />
        <ellipse cx="24" cy="10" rx="6" ry="8" />
      </svg>
      <div className="absolute bottom-0 right-0 flex h-[95px] w-[200px] items-center bg-[#212e54] pl-3 text-[#d4d4d4]">
        <svg viewBox="0 0 44 60" className="h-[60px] w-11 shrink-0" fill="currentColor" aria-hidden="true">
          <path d="M3 8l7 3 5 0 2 4 3 2-2 3-5 0q-1 7 3 10 5 2 12 2 9 1 10 9l-1 5 1 12h-4l-2-12-3-4q-6 3-14 2l-2 14H9l1-14q-8-5-9-13-1-6 5-14z" />
          <path d="M13 11Q8 7 10 2M14 11Q20 12 28 9T42 3M18 10l-4-6M22 10l-3-9M28 9l-3-7M33 7l-2-5M17 12q10 4 16-2" fill="none" stroke="currentColor" strokeWidth="1.300" />
        </svg>
        <div className="pl-[9px]">
          <p className="whitespace-nowrap text-[28px] font-bold leading-8">
            <span className="font-[family-name:Inter,sans-serif] text-[30px] font-medium">3D</span>溜溜网
          </p>
          <p className="font-[family-name:Inter,sans-serif] text-[23px] font-light leading-7">3D66.COM</p>
        </div>
      </div>
    </div>
  );
}
